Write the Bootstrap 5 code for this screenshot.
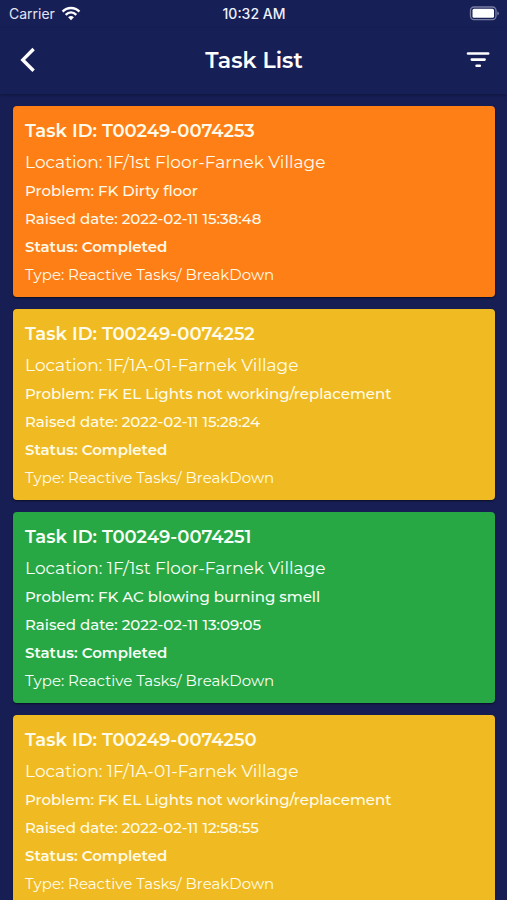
<!DOCTYPE html>
<html lang="en">
<head>
<meta charset="utf-8">
<meta name="viewport" content="width=device-width, initial-scale=1">
<title>Task List</title>
<link href="https://cdn.jsdelivr.net/npm/bootstrap@5.3.0/dist/css/bootstrap.min.css" rel="stylesheet">
<style>
  body { background: #161e54; color: #fff; font-family: Montserrat, Inter, sans-serif; }
  .status-bar { height: 28px; padding: 0 8px 0 9px; background: #171f57; font-family: Inter, sans-serif; font-size: 14px; line-height: 28px; color: #e3e5f2; }
  .carrier { gap: 6px; }
  .status-time { font-weight: 500; color: #eef0fa; }
  .app-bar { height: 66px; padding: 0 17px 0 18px; background: #171f57; box-shadow: 0 1px 3px rgba(0, 0, 0, .3); z-index: 1; }
  .app-title { font-size: 22px; line-height: 28px; font-weight: 600; }
  .icon-btn { width: 24px; height: 28px; }
  .task-scroll { overflow-y: auto; scrollbar-width: none; padding: 12px 12px 12px 13px; }
  .task-scroll::-webkit-scrollbar { display: none; }
  .task-stack { gap: 12px; }
  .task-card { padding: 9px 12px 8px; border-radius: 4px; box-shadow: 0 1px 2px rgba(0, 0, 0, .5); color: #fffbea; font-size: 15px; line-height: 28px; }
  .task-id { font-size: 18px; line-height: 32px; font-weight: 600; }
  .task-location { font-size: 17px; line-height: 30px; }
  .task-problem, .task-date { font-weight: 500; }
  .task-status { font-weight: 600; }
  .tone-orange { background: #ff7f17; }
  .tone-yellow { background: #f0bb22; }
  .tone-green { background: #28a745; color: #f6fff6; }
</style>
</head>
<body>
<div class="d-flex flex-column vh-100">
  <div class="status-bar row g-0 flex-shrink-0">
    <div class="carrier col d-flex align-items-center">
      <span>Carrier</span>
      <svg width="20" height="16" viewBox="0 0 20 16" fill="none" stroke="#fff" stroke-width="2.4" aria-hidden="true">
        <path d="M1.6 5.6C6.4.8 13.6.8 18.4 5.6M4.7 8.8C7.8 5.8 12.2 5.8 15.3 8.8"/>
        <path d="M10 14.2 7.1 11.3Q10 8.8 12.9 11.3Z" fill="#fff" stroke="none"/>
      </svg>
    </div>
    <div class="col-auto status-time">10:32 AM</div>
    <div class="col d-flex align-items-center justify-content-end">
      <svg width="30" height="16" viewBox="0 0 30 16" aria-hidden="true">
        <rect x="1.5" y="1" width="25.5" height="12.6" rx="3.5" fill="none" stroke="#797da2" stroke-width="1.3"/>
        <rect x="3.5" y="2.8" width="21.5" height="9" rx="1.5" fill="#fff"/>
        <path d="M28.3 5.2Q30 6 30 7.3T28.3 9.4Z" fill="#797da2"/>
      </svg>
    </div>
  </div>
  <header class="app-bar d-flex align-items-center justify-content-between flex-shrink-0">
    <button type="button" class="icon-btn btn border-0 p-0 d-flex align-items-center" aria-label="Back">
      <svg width="20" height="28" viewBox="0 0 20 28" fill="none" stroke="#fff" stroke-width="3.4" aria-hidden="true"><path d="M15.6 2 4.8 12.9 15.6 23.8"/></svg>
    </button>
    <h1 class="app-title m-0">Task List</h1>
    <button type="button" class="icon-btn btn border-0 p-0 d-flex align-items-center" aria-label="Filter">
      <svg width="24" height="18" viewBox="0 0 24 18" fill="none" stroke="#fff" stroke-width="2.6" stroke-linecap="round" aria-hidden="true"><path d="M2 1.5H22.2M5.8 7.6H18.6M10.6 13.8H13.8"/></svg>
    </button>
  </header>
  <main class="task-scroll flex-grow-1">
    <div class="task-stack d-flex flex-column">
      <article class="task-card tone-orange">
        <h2 class="task-id m-0">Task ID: T00249-0074253</h2>
        <div class="task-location">Location: 1F/1st Floor-Farnek Village</div>
        <div class="task-problem">Problem: FK Dirty floor</div>
        <div class="task-date">Raised date: 2022-02-11 15:38:48</div>
        <div class="task-status">Status: Completed</div>
        <div>Type: Reactive Tasks/ BreakDown</div>
      </article>
      <article class="task-card tone-yellow">
        <h2 class="task-id m-0">Task ID: T00249-0074252</h2>
        <div class="task-location">Location: 1F/1A-01-Farnek Village</div>
        <div class="task-problem">Problem: FK EL Lights not working/replacement</div>
        <div class="task-date">Raised date: 2022-02-11 15:28:24</div>
        <div class="task-status">Status: Completed</div>
        <div>Type: Reactive Tasks/ BreakDown</div>
      </article>
      <article class="task-card tone-green">
        <h2 class="task-id m-0">Task ID: T00249-0074251</h2>
        <div class="task-location">Location: 1F/1st Floor-Farnek Village</div>
        <div class="task-problem">Problem: FK AC blowing burning smell</div>
        <div class="task-date">Raised date: 2022-02-11 13:09:05</div>
        <div class="task-status">Status: Completed</div>
        <div>Type: Reactive Tasks/ BreakDown</div>
      </article>
      <article class="task-card tone-yellow">
        <h2 class="task-id m-0">Task ID: T00249-0074250</h2>
        <div class="task-location">Location: 1F/1A-01-Farnek Village</div>
        <div class="task-problem">Problem: FK EL Lights not working/replacement</div>
        <div class="task-date">Raised date: 2022-02-11 12:58:55</div>
        <div class="task-status">Status: Completed</div>
        <div>Type: Reactive Tasks/ BreakDown</div>
      </article>
    </div>
  </main>
</div>
<script src="https://cdn.jsdelivr.net/npm/bootstrap@5.3.0/dist/js/bootstrap.bundle.min.js"></script>
</body>
</html>
